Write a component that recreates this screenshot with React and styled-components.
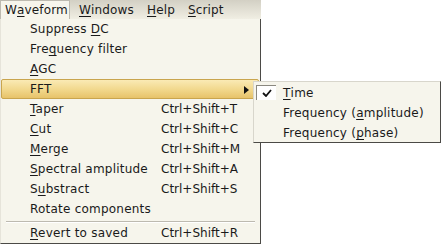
import React from "react";
import styled, { createGlobalStyle } from "styled-components";

const Global = createGlobalStyle`
  html, body { margin: 0; padding: 0; background: #ffffff; }
  body { font-family: "DejaVu Sans", "Liberation Sans", sans-serif; font-size: 12px; color: #1a1a1a; }
`;

const Page = styled.div`
  position: relative;
  width: 441px;
  height: 244px;
  overflow: hidden;
  background: #ffffff;
`;

const MenuBar = styled.div`
  display: flex;
  width: 261px;
  height: 19px;
  background: linear-gradient(#d3d0c4, #f0eee3);
`;

const BarItem = styled.div`
  display: flex;
  align-items: center;
  height: 19px;
  box-sizing: border-box;
  padding-left: ${(p) => p.$pl}px;
  background: ${(p) => (p.$active ? "#f6f5ec" : "transparent")};
  border: ${(p) => (p.$active ? "1px solid #bdbab0" : "none")};
  border-bottom: none;
  width: ${(p) => (p.$w ? `${p.$w}px` : "auto")};
  white-space: nowrap;
  letter-spacing: 0.15px;
`;

const U = styled.span`
  text-decoration: underline;
  text-underline-offset: 2px;
`;

const Dropdown = styled.div`
  width: 261px;
  box-sizing: border-box;
  background: #f6f5ec;
  border-right: 1px solid #4b4a46;
  border-bottom: 1px solid #4b4a46;
  border-left: 1px solid #e6e4da;
`;

const Row = styled.div`
  display: grid;
  grid-template-columns: 131px 1fr;
  align-items: center;
  height: 20px;
  box-sizing: border-box;
  padding-left: 29px;
  position: relative;
  white-space: nowrap;
  ${(p) =>
    p.$hover &&
    `
    margin: 0 1px 0 0;
    background: linear-gradient(#faeab5, #f2d98f 50%, #e7c36a);
    border: 1px solid #c9a54e;
    border-radius: 2px;
    padding-left: 28px;
  `}
`;

const Label = styled.span`
  letter-spacing: 0.22px;
`;

const Shortcut = styled.span``;

const Arrow = styled.span`
  position: absolute;
  right: 9px;
  top: 6px;
  width: 0;
  height: 0;
  border-top: 4px solid transparent;
  border-bottom: 4px solid transparent;
  border-left: 5px solid #111;
`;

const Separator = styled.div`
  height: 4px;
  display: flex;
  align-items: center;
  padding: 0 5px;
  &::before {
    content: "";
    flex: 1;
    height: 1px;
    background: #bdbab0;
    box-shadow: 0 1px 0 #ffffff;
  }
`;

const Submenu = styled.div`
  position: absolute;
  left: 253px;
  top: 81px;
  width: 188px;
  height: 62px;
  box-sizing: border-box;
  background: #f6f5ec;
  border-top: 1px solid #d8d6cc;
  border-left: 1px solid #d8d6cc;
  border-right: 1px solid #4b4a46;
  border-bottom: 1px solid #4b4a46;
  padding-top: 1px;
`;

const SubRow = styled.div`
  display: flex;
  align-items: center;
  height: 20px;
  padding-left: 29px;
  position: relative;
  white-space: nowrap;
  letter-spacing: 0.24px;
`;

const Check = styled.span`
  position: absolute;
  left: 2px;
  top: 2px;
  width: 20px;
  height: 15px;
  box-sizing: border-box;
  background: #ffffff;
  border-top: 1px solid #8a887f;
  border-left: 1px solid #8a887f;
  display: flex;
  align-items: center;
  justify-content: center;
`;

const items = [
  { label: [<React.Fragment key="a">Suppress </React.Fragment>, <U key="b">D</U>, "C"] },
  { label: ["Fre", <U key="b">q</U>, "uency filter"] },
  { label: [<U key="b">A</U>, "GC"] },
  { label: ["FFT"], hover: true, arrow: true },
  { label: [<U key="b">T</U>, "aper"], sc: "Ctrl+Shift+T" },
  { label: [<U key="b">C</U>, "ut"], sc: "Ctrl+Shift+C" },
  { label: [<U key="b">M</U>, "erge"], sc: "Ctrl+Shift+M" },
  { label: [<U key="b">S</U>, "pectral amplitude"], sc: "Ctrl+Shift+A" },
  { label: ["S", <U key="b">u</U>, "bstract"], sc: "Ctrl+Shift+S" },
  { label: ["Rotate components"] },
];

export default function App() {
  return (
    <>
      <Global />
      <Page>
        <MenuBar>
          <BarItem $active $w={70} $pl={4}>
            W<U>a</U>veform
          </BarItem>
          <BarItem $w={67} $pl={9}>
            <U>W</U>indows
          </BarItem>
          <BarItem $w={41} $pl={10}>
            <U>H</U>elp
          </BarItem>
          <BarItem $pl={10}>
            <U>S</U>cript
          </BarItem>
        </MenuBar>
        <Dropdown>
          {items.map((it, i) => (
            <Row key={i} $hover={it.hover}>
              <Label>{it.label}</Label>
              <Shortcut>{it.sc || ""}</Shortcut>
              {it.arrow && <Arrow />}
            </Row>
          ))}
          <Separator />
          <Row>
            <Label>
              <U>R</U>evert to saved
            </Label>
            <Shortcut>Ctrl+Shift+R</Shortcut>
          </Row>
        </Dropdown>
        <Submenu>
          <SubRow>
            <Check>
              <svg width="10" height="8" viewBox="0 0 10 8">
                <path d="M1 4 L4 7 L9 1" fill="none" stroke="#111" strokeWidth="1.8" />
              </svg>
            </Check>
            <U>T</U>ime
          </SubRow>
          <SubRow>
            Frequency (<U>a</U>mplitude)
          </SubRow>
          <SubRow>
            Frequency (<U>p</U>hase)
          </SubRow>
        </Submenu>
      </Page>
    </>
  );
}
